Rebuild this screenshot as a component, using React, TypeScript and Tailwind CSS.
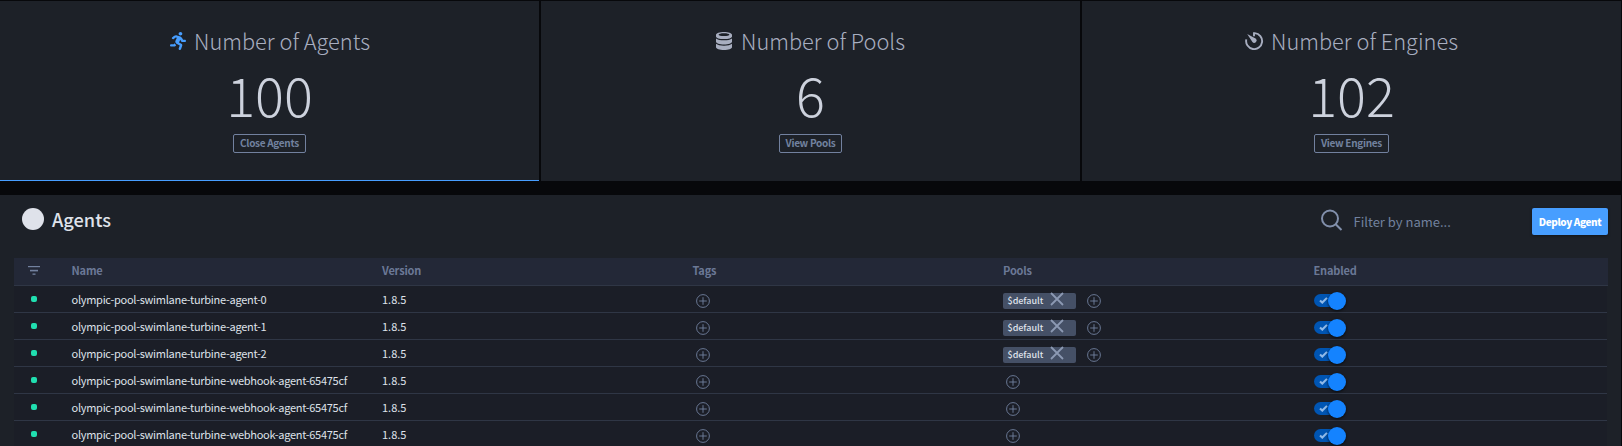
import React from "react";
import { FaRunning } from "react-icons/fa";

function TimerIcon() {
  return (
    <svg viewBox="0 0 19 18" className="mr-[7px] h-[18px] w-[19px]" fill="none">
      <path d="M9 4.3V1.1H9.8A8 8 0 1 1 1.3 7.4" stroke="currentColor" strokeWidth="1.9" />
      <path d="M2.2 2L11 6.8a2.4 2.4 0 1 1-3.6 3.2Z" fill="currentColor" />
    </svg>
  );
}

function DatabaseIcon() {
  return (
    <svg viewBox="0 0 16 18" className="mr-[9px] h-[18px] w-4" fill="currentColor">
      <path
        fillRule="evenodd"
        d="M8 0C12.4 0 16 1.2 16 2.8V4.4C16 5.9 12.4 7.1 8 7.1S0 5.9 0 4.4V2.8C0 1.2 3.6 0 8 0ZM8 1.3C5 1.3 2.6 1.9 2.6 2.7S5 4.1 8 4.1S13.4 3.5 13.4 2.7S11 1.3 8 1.3Z"
      />
      <path d="M0 6.4C1.4 7.7 4.5 8.3 8 8.3S14.6 7.7 16 6.4V9.7C16 11.2 12.4 12.4 8 12.4S0 11.2 0 9.7Z" />
      <path d="M0 11.8C1.4 13.1 4.5 13.7 8 13.7S14.6 13.1 16 11.8V15.2C16 16.8 12.4 18 8 18S0 16.8 0 15.2Z" />
    </svg>
  );
}

interface StatProps {
  icon: React.ReactNode;
  title: string;
  value: string;
  action: string;
  active?: boolean;
}

function Stat({ icon, title, value, action, active }: StatProps) {
  return (
    <section
      className={`flex h-[180px] w-[539px] flex-col items-center border-b bg-[#1d2128] ${active ? "border-[#479eff]" : "border-[#1d2128]"}`}
    >
      <h2 className="mt-[25px] flex h-[30px] items-center text-[21.8px] leading-[30px] font-light text-[#a8aec0]">
        {icon}
        <span>{title}</span>
      </h2>
      <div className="mt-[8px] h-[60px] text-[54px] leading-[60px] font-light text-[#cdd2dd]">{value}</div>
      <button className="mt-[10px] flex h-[19px] items-center rounded-[2px] border border-[#72819f] px-[6px] pb-[3px] text-[10px] font-bold tracking-[-0.3px] text-[#72819f]">
        {action}
      </button>
    </section>
  );
}

function PlusCircle() {
  return (
    <svg viewBox="0 0 14 14" className="h-[14px] w-[14px] shrink-0" fill="none" stroke="#72819f" strokeWidth="0.9">
      <circle cx="7" cy="7" r="6.4" />
      <path d="M7 3.2V10.8M3.2 7H10.8" />
    </svg>
  );
}

function Toggle() {
  return (
    <div className="relative mt-[4px] h-[18px] w-8">
      <div className="mt-[2px] flex h-[13px] w-7 items-center rounded-full bg-[#0055b3] pl-[5px]">
        <svg viewBox="0 0 10 8" className="h-[7px] w-[9px]" fill="none" stroke="#8fb9e8" strokeWidth="2.4">
          <path d="M1 4L3.6 6.4L9 1" />
        </svg>
      </div>
      <div className="absolute top-0 right-0 h-[18px] w-[18px] rounded-full bg-[#1483ff] shadow-[0_1px_3px_rgba(0,0,0,0.7)]" />
    </div>
  );
}

const agents = [
  { name: "olympic-pool-swimlane-turbine-agent-0", pool: true },
  { name: "olympic-pool-swimlane-turbine-agent-1", pool: true },
  { name: "olympic-pool-swimlane-turbine-agent-2", pool: true },
  { name: "olympic-pool-swimlane-turbine-webhook-agent-65475cf", pool: false },
  { name: "olympic-pool-swimlane-turbine-webhook-agent-65475cf", pool: false },
  { name: "olympic-pool-swimlane-turbine-webhook-agent-65475cf", pool: false },
];

export default function App() {
  return (
    <div className="h-[446px] w-[1622px] overflow-hidden bg-[#07080b] pt-px font-['Noto_Sans_CJK_SC',sans-serif]">
      <div className="flex gap-[2px]">
        <Stat
          active
          icon={<FaRunning preserveAspectRatio="none" className="mr-[8px] ml-px h-[18px] w-4 text-[#479eff]" />}
          title="Number of Agents"
          value="100"
          action="Close Agents"
        />
        <Stat icon={<DatabaseIcon />} title="Number of Pools" value="6" action="View Pools" />
        <Stat icon={<TimerIcon />} title="Number of Engines" value="102" action="View Engines" />
      </div>
      <main className="mt-[14px] h-[251px] w-[1621px] bg-[#1d2128] px-[14px]">
        <header className="flex h-[63px] w-[1594px] items-start">
          <div className="mt-[13px] ml-2 h-[21.500px] w-[22px] rounded-full bg-[#dfe2ea]" />
          <h1 className="mt-[9px] ml-[8px] text-[18.2px] leading-[30px] font-medium text-[#dfe2ea]">Agents</h1>
          <div className="mt-[13px] ml-auto flex items-start">
            <svg viewBox="0 0 24 24" className="h-6 w-6" fill="none" stroke="#818fab" strokeWidth="2">
              <circle cx="10" cy="10.5" r="8" />
              <path d="M15.700 16.200L21.500 22" />
            </svg>
            <span className="ml-[9.5px] w-[178.5px] text-[13px] leading-[28px] text-[#72819f]">Filter by name...</span>
            <button className="flex h-[27px] w-[76px] items-center justify-center rounded-[2px] bg-[#479eff] pb-px text-[10px] font-black tracking-[-0.4px] text-white shadow-[0_1px_3px_rgba(0,0,0,0.4)]">
              Deploy Agent
            </button>
          </div>
        </header>
        <div className="grid h-[28px] w-[1594px] grid-cols-[57.5px_310.5px_310.5px_310.5px_310.5px_1fr] items-center border-b border-[#2f3645] bg-[#232837] pb-[2px] text-[11px] font-bold tracking-[-0.18px] text-[#6b7896]">
          <svg viewBox="0 0 12 9" className="-mt-px ml-[14px] h-[9px] w-3" fill="#72819f">
            <rect width="12" height="1.2" />
            <rect x="2" y="3.8" width="8" height="1.6" />
            <rect x="4.5" y="7.5" width="3" height="1.3" />
          </svg>
          <span>Name</span>
          <span>Version</span>
          <span>Tags</span>
          <span>Pools</span>
          <span>Enabled</span>
        </div>
        {agents.map((a, i) => (
          <div
            key={i}
            className="grid h-[27px] w-[1593px] grid-cols-[57.5px_310.5px_310.5px_310.5px_310.5px_1fr] items-center border-b border-[#2f3645] bg-[#1b1e27] text-[11px] text-[#dfe2ea]"
          >
            <span className="mb-px ml-[17px] h-[6px] w-[6px] rounded-[2px] bg-[#20dfb0]" />
            <span className="whitespace-nowrap tracking-[-0.28px]">{a.name}</span>
            <span>1.8.5</span>
            <span className="pt-[3px] pl-[3px]">
              <PlusCircle />
            </span>
            <span className="flex items-center pt-[3px]">
              {a.pool && (
                <span className="mr-[10.5px] flex h-4 w-[73px] items-center rounded-[2px] bg-[#455066] pl-[4.5px] text-[9px] font-medium">
                  <span>$default</span>
                  <svg viewBox="0 0 14 14" className="-mt-[3px] ml-[7px] h-[14px] w-[14px]" fill="none" stroke="#8c99b3" strokeWidth="1.8">
                    <path d="M1 1L13 13M13 1L1 13" />
                  </svg>
                </span>
              )}
              <span className={a.pool ? "" : "ml-[3px]"}>
                <PlusCircle />
              </span>
            </span>
            <Toggle />
          </div>
        ))}
      </main>
    </div>
  );
}
